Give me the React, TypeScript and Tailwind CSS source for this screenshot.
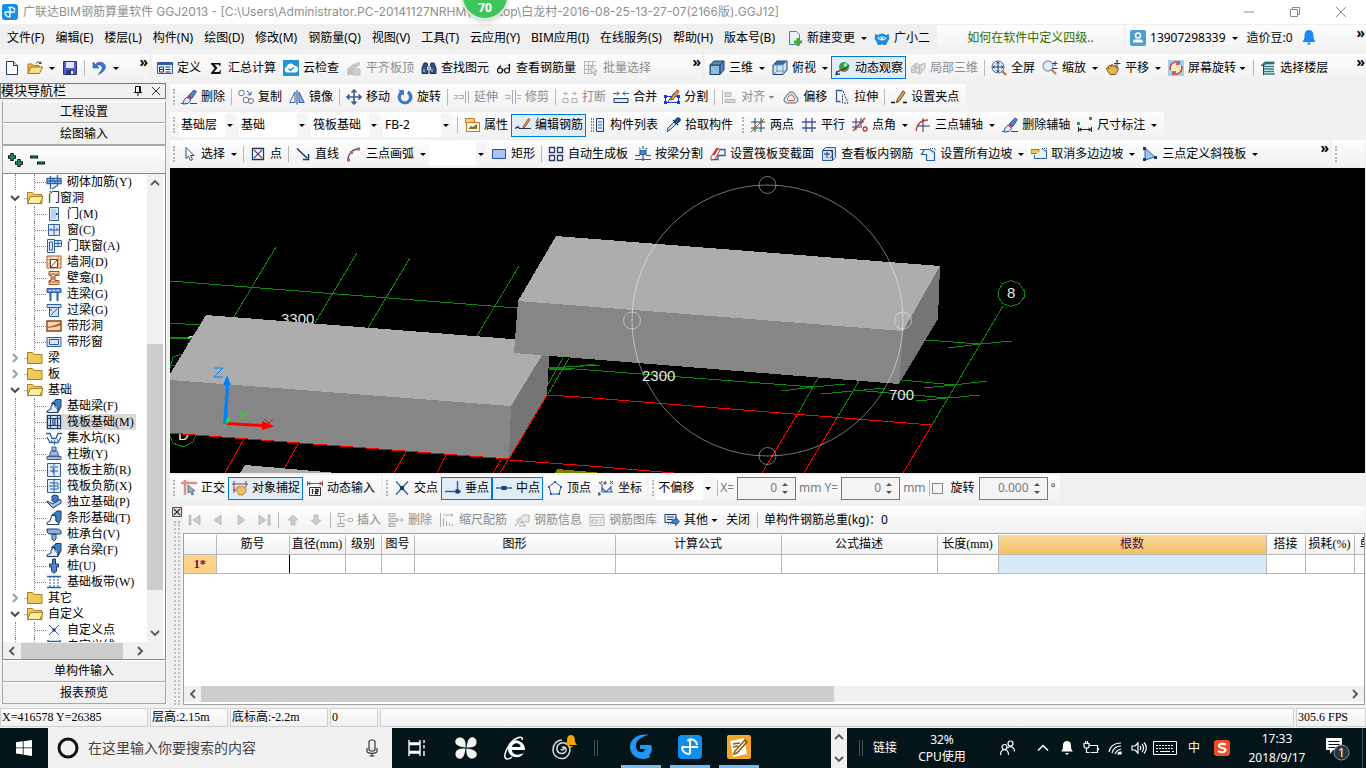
import React from 'react';
import clsx from 'clsx';

const B = '#2a5fa8'; // 图标主色
const N = '#1b3a6b';
const R = '#c0392b';
const G = '#2e9e3e';

// 16x16 工具栏图标
const icons: Record<string, React.ReactNode> = {
  logo: (
    <>
      <rect width="16" height="16" rx="3" fill="#1290ea" />
      <path d="M8 3.500V13M3 8h10M3 8c0 3 2 5 5 5M6.500 4C8 2.500 12.500 3 13 6.500" fill="none" stroke="#fff" strokeWidth="1.400" />
    </>
  ),
  file: (
    <>
      <path d="M2.500 1.500h7l4 4v9h-11z" fill="#fff" stroke={N} />
      <path d="M9.500 1.500v4h4" fill="#cfe0f5" stroke={N} />
    </>
  ),
  open: (
    <>
      <path d="M1 13V4h4l1.500 1.500H12V8" fill="#e9b949" stroke="#a9771a" />
      <path d="M1 13.500L4 7h11.500l-3 6.500z" fill="#fbe08d" stroke="#a9771a" />
      <path d="M9 3.500c1.500-2 4-2 5 0m0 0V1.500m0 2h-2" fill="none" stroke={N} />
    </>
  ),
  save: (
    <>
      <path d="M1.500 1.500h13v13h-13z" fill="#4b5fc4" stroke="#28347c" />
      <path d="M4 2h8v6H4z" fill="#dfe6f8" />
      <path d="M4.500 10h7v4.500h-7z" fill="#28347c" />
      <path d="M9 11h2v3H9z" fill="#fff" />
    </>
  ),
  undo: <path d="M2 2v6h6L5.800 5.800c2.500-1.800 5.800-.3 5.200 2.700-.4 2-2 3.500-3.500 6 4-1.800 7.500-5 6.800-8.500C13.500 2 7.500.8 4.300 4.300z" fill="#3c74cf" stroke="#2a56a3" strokeWidth=".6" />,
  define: (
    <>
      <path d="M.5 2.500h15v11H.5z" fill="#eaf1fb" stroke={B} />
      <path d="M.5 2.500h15v2.500H.5z" fill={B} />
      <path d="M2.500 7h4v5h-4zM8.500 7h5M8.500 9.500h5M8.500 12h5M2.500 9.500h4" fill="none" stroke={N} />
    </>
  ),
  sigma: <path d="M3 3h9.500v3h-1c-.2-1.200-.6-1.500-1.500-1.500H6.500L9.500 8l-3.500 4h4c1.200 0 1.700-.5 2-1.800h1L12.500 14H3v-1l3.700-4.700L3 4z" fill="#111" />,
  cloud: (
    <>
      <rect width="16" height="16" fill="#2196d6" />
      <path d="M4 12.500a3 3 0 0 1-.3-5.800 4 4 0 0 1 7.500-1A3.400 3.400 0 0 1 12 12.500z" fill="#fff" />
      <path d="M5.500 8.500l2 2 3.500-3.500" fill="none" stroke="#2196d6" strokeWidth="1.400" />
    </>
  ),
  align: (
    <>
      <path d="M1 9l6-5 7-2v3l-6 4v6H1z" fill="#999" />
      <path d="M8 9h6v6H8zM3 11h3M3 13h3M10 11h3M10 13h3" fill="#ccc" stroke="#777" />
    </>
  ),
  find: (
    <>
      <path d="M1 13.500V8l2-5h3l1 4v6.500zM15 13.500V8l-2-5h-3L9 7v6.500z" fill="#37527e" stroke="#1d3053" />
      <path d="M6.500 7h3v3h-3zM3 9v3M11 9v3" fill="#8ba6cf" stroke="#c2d3ec" />
    </>
  ),
  glasses: (
    <>
      <circle cx="4" cy="10.500" r="2.500" fill="none" stroke="#111" strokeWidth="1.200" />
      <circle cx="11" cy="10.500" r="2.500" fill="none" stroke="#111" strokeWidth="1.200" />
      <path d="M6.500 10h2M13.500 10V4.500L12 5.500M2 8.500l3-3" fill="none" stroke="#111" strokeWidth="1.200" />
    </>
  ),
  batch: (
    <>
      <path d="M1 1.500h12M1 5.500h12M1 9.500h9M1 13.500h7M1.500 1v13M5.500 1v13M9.500 1v8" fill="none" stroke="#777" />
      <path d="M8 6l6 5-2.500.5L13 15l-1.500.5L10 12l-2 1.500z" fill="#ddd" stroke="#666" />
    </>
  ),
  cube: (
    <>
      <path d="M1 5l4-4h10v9l-4 4.500H1z" fill="#4f8cc0" stroke="#1c3f66" />
      <path d="M2 6h8v8H2z" fill="#8dbde0" />
      <path d="M1 5h10v9.500M11 5l4-4" fill="none" stroke="#1c3f66" />
    </>
  ),
  cubeTop: (
    <>
      <path d="M1 5l4-4h10v9l-4 4.500H1z" fill="#cfe3f5" stroke="#1c3f66" />
      <path d="M1 5l4-4h10l-4 4z" fill="#2e6ca8" />
      <path d="M1 5h10v9.500M5 5v6h9M5 11l-3 3" fill="none" stroke="#6b93bb" />
    </>
  ),
  orbit: (
    <>
      <circle cx="9" cy="7" r="5" fill="#2ea043" />
      <circle cx="10.500" cy="5" r="2" fill="#9be39f" />
      <path d="M1 14c0-4 9-3 13-9M5 14l-4 .5L2 11" fill="none" stroke="#1c3f66" strokeWidth="1.300" />
      <path d="M4 10c3 1 7 0 9-2" fill="none" stroke="#c33" />
    </>
  ),
  part3d: <path d="M1 8l5-5 4 2 5-2v5l-5 6-4-2-4 1zM6 3l-1 9M10 5l-1 8M3 6l10 4M2 10l10-5" fill="#ccc" stroke="#777" />,
  fullscreen: (
    <>
      <circle cx="7" cy="7" r="6" fill="#e4eefb" stroke="#3a5f95" />
      <path d="M7 2v10M2 7h10M5.500 3.500L7 2l1.500 1.500M5.500 10.500L7 12l1.500-1.500M3.500 5.500L2 7l1.500 1.500M10.500 5.500L12 7l-1.500 1.500" fill="none" stroke={N} />
      <path d="M11 11l4 4" stroke="#b5702a" strokeWidth="2.200" />
    </>
  ),
  zoom: (
    <>
      <circle cx="6" cy="6" r="5" fill="#e4eefb" stroke="#8d9db5" strokeWidth="1.300" />
      <path d="M9.500 9.500l4.500 4.500" stroke="#c5862f" strokeWidth="2.200" />
      <path d="M13 1v5M10.500 3.500h5M10.500 8.500h5" stroke={N} />
    </>
  ),
  pan: (
    <>
      <path d="M1 8.500l2-1 1 1.500-.5-3 1.500-1 1.500 2L6 5l1.500-.5 1 2.500 1-2 1.500.5V8l2-.5.5 1.500-3 5.500H5z" fill="#e5b25a" stroke="#8c5a17" />
      <path d="M12 0v7M9 3.500h6.500M11 1.500L12 .3l1 1.200" fill="none" stroke={N} />
    </>
  ),
  screenRotate: (
    <>
      <path d="M0 0h16v16H0z" fill="#9ed0ee" />
      <path d="M3 9h10v5H3z" fill="#b8df8f" />
      <circle cx="8" cy="8" r="5" fill="#f7e8c0" />
      <path d="M2.500 10a6 6 0 0 1 9-7M13.500 6a6 6 0 0 1-9 7M11 1v3H8M5 15v-3h3" fill="none" stroke="#e0332c" strokeWidth="1.400" />
    </>
  ),
  floors: (
    <>
      <path d="M1 5.500L5 2h9v2H6L3 5.500z" fill="#2f7f86" stroke="#17484d" strokeWidth=".6" />
      <path d="M4 6.500h10M4 9h10M4 11.500h10M3 14h12" stroke="#2f7f86" strokeWidth="1.500" />
      <path d="M3.500 5v10" stroke="#17484d" />
    </>
  ),
  erase: (
    <>
      <path d="M0 14.500h6M9 14.500h7" stroke="#2a4a80" />
      <path d="M3 11l3-3 4 3-3 3.500-5 .5z" fill="#dfe7f5" stroke="#2a56a3" />
      <path d="M6 8l1.500-1.500 3.500 3L9.500 11z" fill="#c43e6b" />
      <path d="M7.500 6.500L13 1l2.500 1.500L11 9.500z" fill="#4e84cc" stroke={N} strokeWidth=".7" />
    </>
  ),
  copy: (
    <>
      <circle cx="3.500" cy="4" r="2.800" fill="none" stroke="#63748c" />
      <circle cx="8" cy="11" r="2.800" fill="none" stroke="#63748c" />
      <circle cx="13" cy="12" r="2.500" fill="none" stroke="#63748c" />
      <path d="M9 2l3.500 3.500M13 2.500v3.300H9.700" fill="none" stroke={B} />
    </>
  ),
  mirror: (
    <>
      <path d="M6 3v10.500H.8z" fill="#fff" stroke={B} />
      <path d="M10 3v10.500h5.200z" fill="#8fb4e5" stroke={B} />
      <path d="M8 1v14.500" stroke={N} />
    </>
  ),
  move: <path d="M8 1v14M1 8h14M5.500 3.500L8 1l2.500 2.500M5.500 12.500L8 15l2.500-2.500M3.500 5.500L1 8l2.500 2.500M12.500 5.500L15 8l-2.500 2.500" fill="none" stroke="#3b5c8d" strokeWidth="1.600" />,
  rotate: <path d="M10.500 4.500a4.500 4.500 0 1 1-5.500.3L6.500 6V1.500H2l1.300 1.300a7 7 0 1 0 8.400-.8z" fill="#3f7ad0" stroke="#2558a5" strokeWidth=".7" />,
  extend: <path d="M0 6.500h3v3H0M4.500 6.500h5v3h-5M11.500 2v12M14.500 2v12" fill="none" stroke="#666" />,
  trim: <path d="M0 6.500h5v3H0M7.500 1v14M10.500 1v14M12 6.500h4M12 9.500h4" fill="none" stroke="#666" />,
  breakIcon: <path d="M1 9.500h5v4H1zM10 9.500h5v4h-5zM6 4.500H2M4 2.500l-2 2 2 2M10 4.500h4M12 2.500l2 2-2 2" fill="none" stroke="#666" />,
  merge: (
    <>
      <path d="M1 9.500h14v4H1z" fill="#dce8f8" stroke={N} />
      <path d="M0 4.500h6M4 2.500l2 2-2 2M16 4.500h-6M12 2.500l-2 2 2 2" fill="none" stroke={B} />
    </>
  ),
  split: (
    <>
      <path d="M1.500 7.500h13v6h-13z" fill="#fff" stroke="#1a3fd0" />
      <path d="M0 6h3v3H0zM13 6h3v3h-3zM0 12h3v3H0zM13 12h3v3h-3z" fill="#1a3fd0" />
      <path d="M4 13l6-9" stroke="#1a3fd0" />
      <path d="M7 9l6-8 2 1.500-6 8-2.500.5z" fill="#e9a949" stroke="#8b3a1f" />
    </>
  ),
  alignSide: <path d="M1.500 1v14M4 3.500h6v4H4zM4 10.500h10v3H4z" fill="#bbb" stroke="#777" />,
  offset: (
    <>
      <path d="M5 5a3.500 3.500 0 0 1 6.500 0l3 4a3.500 3.500 0 0 1-2 5h-9a3.500 3.500 0 0 1-2-5z" fill="#dbe4ee" stroke="#4c6885" />
      <path d="M6.500 6.500a2 2 0 0 1 3 0l2 3a1.500 1.500 0 0 1-1 2h-5a1.500 1.500 0 0 1-1-2z" fill="#fff" stroke="#d0402f" />
    </>
  ),
  stretch: (
    <>
      <path d="M8.500 1.500h-6v11h4" fill="none" stroke={B} strokeWidth="1.300" />
      <path d="M9 2l5 12H8.500v-9" fill="none" stroke={N} strokeDasharray="2 1" />
    </>
  ),
  grip: (
    <>
      <path d="M0 13.500h4M12 13.500h4" stroke="#111" strokeWidth="1.500" />
      <path d="M6 11l6-9 2 1.500-6 9-2.500 1z" fill="#e9b949" stroke="#5b3a1f" />
    </>
  ),
  props: (
    <>
      <path d="M1.500 1.500h9v4h-9z" fill="#f7cf8a" stroke="#b9782a" />
      <path d="M2.500 5.500h13v9h-13z" fill="#fff6e0" stroke="#b9782a" />
      <path d="M4 12l3-3 2 1 4-3v5z" fill="#8d6b2b" />
    </>
  ),
  editBar: (
    <>
      <path d="M0 11.500l3-2c0 2 1 2 3 2h10" fill="none" stroke="#333" strokeWidth="1.200" />
      <path d="M8.500 9l5-7.500L15 2.800 10 10l-2 .7z" fill="#e7a04a" stroke="#8b3a1f" strokeWidth=".8" />
    </>
  ),
  list: (
    <>
      <path d="M1 2h3M1 5h3M1 8h3M1 11h3M1 14h3" stroke={B} strokeDasharray="1 1" strokeWidth="1.500" />
      <path d="M6.500 1.500h7v13h-7z" fill="#e9f1fb" stroke={N} />
      <path d="M8 5h4M8 8h4M8 11h4" stroke={B} />
    </>
  ),
  pick: (
    <>
      <path d="M2 14.500l1-3.500 6-6 2 2-6 6z" fill="#bfe0f5" stroke="#1f5488" />
      <path d="M8 3l5 5M9.500 4.500L12 1.500c1.500-1.500 4 1 2.500 2.500L11.500 6.500z" fill="#245b9c" stroke="#173f70" strokeWidth="1.500" />
    </>
  ),
  axis2: (
    <>
      <path d="M5 1v14M11 1v14M1 5h14M1 11h14" stroke={N} />
      <path d="M1 15L14 2" stroke={R} />
      <circle cx="5" cy="11" r="1.500" fill={G} />
      <circle cx="11" cy="5" r="1.500" fill={G} />
    </>
  ),
  axisPar: <path d="M5 1v14M11 1v14M1 5h14M1 11h14" stroke="#3c5a9a" strokeWidth="1.300" />,
  axisAngle: (
    <>
      <path d="M4 1v12M9 1v8M0 5h12M0 10h10" stroke={N} />
      <path d="M1 14L13 1" stroke={R} strokeWidth="1.300" />
      <circle cx="13" cy="12" r="2" fill="none" stroke={R} strokeWidth="1.300" />
    </>
  ),
  axisArc: (
    <>
      <path d="M1 14C2 7 6 3 13 3" fill="none" stroke={R} strokeWidth="1.300" />
      <path d="M8 1v14M3 9h12" stroke={N} />
    </>
  ),
  dim: (
    <>
      <path d="M1.500 10v5M14.500 10v5M2 12.500h12M4.500 11L2 12.500 4.500 14M11.500 11l2.500 1.500-2.500 1.500" fill="none" stroke="#222" />
      <path d="M0 5h3v3H0zM12 0h3v3h-3z" fill={G} />
    </>
  ),
  cursor: <path d="M5 1.500v11l2.500-2.300 2 4.300 2-1-2-4H13z" fill="#fff" stroke="#33496e" />,
  point: (
    <>
      <path d="M2.500 2.500h11v11h-11z" fill="#fff" stroke={N} strokeWidth="1.300" />
      <path d="M4 4l8 8" stroke={R} strokeWidth="1.300" />
      <path d="M12 4l-8 8" stroke={B} strokeWidth="1.300" />
    </>
  ),
  line: <path d="M2 2.500l10 9.500M13.500 8v5.500H8" fill="none" stroke={N} strokeWidth="1.500" />,
  arc: (
    <>
      <path d="M2 14C2 8 6 3 13 3" fill="none" stroke="#3c5a9a" strokeWidth="1.300" />
      <path d="M1 12.500h3v3H1zM4 5h3v3H4zM11 1.500h3v3h-3z" fill="#d8622f" />
    </>
  ),
  rect: <path d="M1.500 3.500h13v9h-13z" fill="#a9c4f2" stroke="#2a4fb0" />,
  autoSlab: <path d="M1.500 1.500h5v5h-5zM9.500 1.500h5v5h-5zM1.500 9.500h5v5h-5zM9.500 9.500h5v5h-5z" fill="#fff" stroke="#2a3f6b" strokeWidth="1.400" />,
  beamSplit: <path d="M5 4.500h6v4H5zM8 0v3M8 9v6M0 9.500h5M11 9.500h5M0 13.500h16M4 2l1.500 1M12 2l-1.500 1" fill="#4e84cc" stroke={B} strokeWidth="1.200" />,
  raftEdit: (
    <>
      <path d="M1 13.500h7v-4h7v-6H8" fill="none" stroke={B} strokeWidth="1.300" />
      <path d="M1 11l6-9 3 2-5 9-4 1z" fill="#fff" stroke="#d0302a" />
      <path d="M3.500 9l4-6.500" stroke="#d0302a" strokeWidth="2" />
    </>
  ),
  viewBars: (
    <>
      <path d="M1.500 4.500l3-3h10v10l-3 3h-10z" fill="#cfe0f5" stroke={B} />
      <path d="M1.500 4.500h10v10M3 8h6M6 6v6M9 12c3-1 3-6 1-7" fill="none" stroke={N} />
    </>
  ),
  slope: (
    <>
      <path d="M0 3.500h9M4.500 3.500l-3 5h5v6h8v-8l-5-3" fill="#e9f1fb" stroke={B} strokeWidth="1.200" />
      <path d="M10 2.500h5v3" fill="none" stroke={N} strokeDasharray="1 1" />
    </>
  ),
  slopeOff: (
    <>
      <path d="M0 3.500h8v4H0z" fill="#f2cc4d" stroke="#9a741b" />
      <path d="M3.500 9v3.500h12v-7l-4-2" fill="#e9f1fb" stroke={B} />
      <path d="M11 2.500h4.500v3" fill="none" stroke={N} strokeDasharray="1 1" />
    </>
  ),
  slant: (
    <>
      <path d="M3 2v12l10-3z" fill="#9cc3f2" stroke={B} />
      <path d="M1 1h3v3H1zM1 12h3v3H1zM12 10h3v3h-3z" fill={N} />
    </>
  ),
  ortho: (
    <>
      <path d="M0 3h16M4 0v15" stroke="#dc8f8b" strokeWidth="2.500" />
      <path d="M7 5l7 6h-3l1.500 3.500-1.500.5-1.500-3.500L7 13z" fill="#9eb3c9" stroke="#5b7391" />
    </>
  ),
  snap: (
    <>
      <path d="M2 1v12M0 4h16M14 1v6M1 10h5" stroke="#913a30" />
      <path d="M4 9c0-2 2-2 2-.5V7c1-1.500 2-1 2.500 0 1-1 2-1 2.500 0 1.500-.5 3 0 3 2v3l-3 3H7z" fill="#ecc06a" stroke="#9a6a22" strokeWidth=".7" />
    </>
  ),
  dynInput: (
    <>
      <path d="M.5 1v5M15.500 1v5M1 3.500h14M3.500 2L1 3.500 3.500 5M12.500 2L15 3.500 12.500 5" fill="none" stroke="#a04840" />
      <path d="M2.500 7.500h11v8h-11z" fill="#fff" stroke="#333" />
      <path d="M5.500 9v5M8 9.500h3v2H8.500v2H11" fill="none" stroke="#222" strokeWidth="1.300" />
    </>
  ),
  cross: (
    <>
      <path d="M2 1.500l12 13M14 1.500l-12 13" stroke={B} strokeWidth="1.300" />
      <path d="M6 6h4v4H6z" fill={N} />
    </>
  ),
  perp: (
    <>
      <path d="M0 11.500h16M12.500 1v12" stroke={B} strokeWidth="1.400" />
      <path d="M10.500 9.500h4v4h-4z" fill={N} />
    </>
  ),
  mid: (
    <>
      <path d="M0 8h16" stroke={B} strokeWidth="1.400" />
      <path d="M5.500 6h5v4h-5z" fill={N} />
    </>
  ),
  vertex: (
    <>
      <path d="M8 2l6 4.500L12 14H4L2 6.500z" fill="none" stroke={B} />
      <path d="M7 1h2v2H7zM1 6h2v2H1zM13 6h2v2h-2zM3 13h2v2H3zM11 13h2v2h-2z" fill={B} />
    </>
  ),
  coord: (
    <>
      <path d="M4 4v8h11M4 8l4 4 5-5v5" fill="none" stroke={B} strokeWidth="1.200" />
      <path d="M1 2l1.500 2L4 1M1 14h1M12 1l3 3M15 1l-3 3M6 2h2v2H6zM0 13h2v2H0z" fill="none" stroke="#444" />
    </>
  ),
  first: <path d="M2 3h2v10H2zM13 3v10L6 8z" fill="#ccc" stroke="#aaa" strokeWidth=".6" />,
  prev: <path d="M11 3v10L4 8z" fill="#ccc" stroke="#aaa" strokeWidth=".6" />,
  next: <path d="M5 3v10l7-5z" fill="#ccc" stroke="#aaa" strokeWidth=".6" />,
  last: <path d="M12 3h2v10h-2zM3 3v10l7-5z" fill="#ccc" stroke="#aaa" strokeWidth=".6" />,
  up: <path d="M8 3l5 5h-3v5H6V8H3z" fill="#ccc" stroke="#aaa" strokeWidth=".6" />,
  down: <path d="M8 13l5-5h-3V3H6v5H3z" fill="#ccc" stroke="#aaa" strokeWidth=".6" />,
  insertRow: <path d="M1 1.500h6v3H1zM1 11.500h6v3H1zM3.500 4.500v7M6 8h4M11.500 6.500h4v3h-4z" fill="none" stroke="#666" />,
  removeRow: <path d="M1 1.500h6v3H1zM1 6.500h8v3H1zM1 11.500h6v3H1zM9 8h6M13 6l2 2-2 2" fill="#ccc" stroke="#666" />,
  scaleBar: <path d="M1.500 1v14M4 3h10M12 1.500L14 3l-2 1.500M4.500 6v8M7.500 9v5M10.500 11v3M13.500 12v2" fill="none" stroke="#666" />,
  barInfo: <path d="M1 14L9 3h6v7H7M2 9c3-5 6-3 6 1l4 4H5M5 12l3-3" fill="#ddd" stroke="#777" />,
  barLib: <path d="M1 2.500h14v11H1zM1 5.500h14M3 8h5v3H3zM10 8h3M10 11h3" fill="#eee" stroke="#777" />,
  others: (
    <>
      <path d="M1 2.500h11v8H1zM3 5h7M3 7.500h5" fill="#e9f1fb" stroke={N} />
      <path d="M4 12h4" stroke={N} strokeDasharray="1 1" />
      <path d="M8 7.500h3.500V5l4 4.500-4 4.500v-2.500H8z" fill="#3f7ad0" stroke={N} strokeWidth=".6" />
    </>
  ),
  newChange: (
    <>
      <path d="M2.500 1.500h7l3 3v10h-10z" fill="#e6f4fb" stroke="#2d8dbd" />
      <path d="M9.500 8h3v2.500H15v3h-2.500V16h-3v-2.500H7v-3h2.500z" fill="#49a827" />
    </>
  ),
  robot: (
    <>
      <path d="M1 4l3 1A6 6 0 0 1 12 5l3-1v3c1 1 .5 3-1 3.500-.3 2-1.500 3-2 4.500H9.500L8 14l-1.500 1H4c-.5-1.500-1.700-2.500-2-4.500C.7 10 0 8 1 7z" fill="#1e8ce0" />
      <path d="M3.500 7.500c2-1.500 7-1.500 9 0 0 4-9 4-9 0z" fill="#cdeafd" />
      <path d="M6 7.500v1.500M10 7.500v1.500" stroke="#0d4b80" />
    </>
  ),
  user: (
    <>
      <rect width="16" height="16" rx="2" fill="#4a9fd0" />
      <circle cx="8" cy="5.500" r="2.500" fill="none" stroke="#fff" strokeWidth="1.500" />
      <path d="M3 12.500c0-4 3-3 5-3s5-1 5 3z" fill="#fff" />
    </>
  ),
  bell: <path d="M8 0C4.500 0 3.500 3 3.500 6c0 3-1 4-2 6h13c-1-2-2-3-2-6 0-3-1-6-4.500-6zM6 12.500h4L8 15.500z" fill="#1e88f5" />,
};

// 构件树图标
const treeIcons: Record<string, React.ReactNode> = {
  masonry: <path d="M1 4.500h14v5H1zM1 7h14M4.500 2v13M11.500 1v11M7 4v3M9 7v3M6 15l6-4" fill="#d5e4f7" stroke={B} strokeWidth="1.300" />,
  door: (
    <>
      <path d="M3.500 1.500h9v13h-9z" fill="#e3edfa" stroke={B} />
      <path d="M5 3h5v10H5z" fill="#b9d2f2" />
      <path d="M10 7h1.500v2H10z" fill={N} />
    </>
  ),
  window: <path d="M2.500 2.500h11v11h-11zM8 2.500v11M3 8h10M5 8V6M11 8V6" fill="#e3edfa" stroke={B} />,
  doorWin: <path d="M1.500 1.500h7v13h-7zM8.500 2.500h7v6h-7zM12 2v7M9 5.500h6M3.500 4h3v8h-3z" fill="#e3edfa" stroke={B} />,
  wallHole: (
    <>
      <path d="M1 2h14v12H1z" fill="#fbe3d0" stroke="#b5541c" />
      <path d="M1 6h14M1 10h14M4 2v12M12 2v12" stroke="#d98a55" />
      <path d="M4.500 5.500h7v8h-7zM5 13l6-7" fill="#fff" stroke="#6b3a18" />
    </>
  ),
  niche: <path d="M3 1.500h10v4H9v5h4v4H3v-4h2v-5H3zM3 4h9M5 7h4M5 9h4M3 12h9" fill="#f9d9bd" stroke="#a34f1d" />,
  beamG: (
    <>
      <path d="M1 2.500h14v4H1z" fill="#5f97da" stroke={B} />
      <path d="M3 4.500h2M7 4.500h2M11 4.500h2" stroke="#dce8f8" />
      <path d="M4.500 7v8M11.500 7v8" stroke={B} strokeWidth="2" />
    </>
  ),
  lintel: <path d="M1 2.500h14v3H1zM3.500 5.500h9v9h-9zM5 13l6-6M3 8h3" fill="#cfe0f5" stroke={B} />,
  bandHole: (
    <>
      <path d="M1 3h14v10H1z" fill="#f7d4b8" stroke="#8b4513" strokeWidth="1.400" />
      <path d="M1 9c5-1 10-2 14-5v3c-4 2-9 2-14 3z" fill="#a8602c" />
    </>
  ),
  bandWin: <path d="M1 3.500h14v9H1zM3.500 5.500h9v5h-9z" fill="#d5e4f7" stroke={B} />,
  fBeam: (
    <>
      <path d="M1 14.500h11v-3l-3-3V5L5 8v3l-4 2z" fill="#e3edfa" stroke={N} />
      <path d="M5 6l5-4.500h5V9l-3 5V9l-3-2V5z" fill="#3f7fc0" stroke={N} />
    </>
  ),
  raft: <path d="M1.500 1.500h13v13h-13zM4.500 1.500v13M11.500 1.500v13M1.500 4.500h13M1.500 11.500h13M7 4.500v7M9 4.500v7" fill="#dce8f8" stroke={N} strokeWidth="1.200" />,
  pit: <path d="M0 3.500h4l2 5h4l2-5h4M1 7l3 5.500h8L15 7M5 11h1M8 11h1M11 10h1M8 14h1" fill="none" stroke={B} strokeWidth="1.300" />,
  pier: <path d="M6 1h4v4H6zM5 5h6l2 5H3zM1 10.500h14v3H1z" fill="#9fb9da" stroke="#3d5f8f" />,
  rebarMain: <path d="M1.500 1.500h13v13h-13zM4 5h3v6M8 2v12M9 5h3M4 9h8" fill="#e3edfa" stroke={B} />,
  rebarNeg: <path d="M1.500 1.500h13v13h-13zM4 5h8v2M8 2v12M4 11h8V9M3 8h10" fill="#e3edfa" stroke={B} />,
  single: (
    <>
      <path d="M1 8l6 6 8-5V6l-3-1-5 5-6-3z" fill="#9cc3ea" stroke={N} />
      <path d="M6 2l3-1 3 1v5L9 8.500 6 7z" fill="#3f7fc0" stroke={N} />
    </>
  ),
  strip: (
    <>
      <path d="M1 14.500h12v-2L10 11V6L6 5 4 11l-3 1.500z" fill="#fff" stroke={N} />
      <path d="M6 5l5-4h4v8l-2 4-3-2V6z" fill="#3f7fc0" stroke={N} />
    </>
  ),
  cap: <path d="M1 3h11l3 2v3H3L1 6zM6 8h4v5l-2 2-2-2z" fill="#8db4e0" stroke={N} />,
  pile: <path d="M6.500 1h3v5h3v3h-2v4L8 15.500 5.500 13V9h-2V6h3z" fill="#4e84cc" stroke={N} />,
  bandPlate: (
    <>
      <path d="M1 2.500h14M1 13.500h14" stroke={B} strokeWidth="1.500" />
      <path d="M4 2v12M8 2v12M12 2v12" stroke={B} strokeDasharray="2 1" />
    </>
  ),
  custom: (
    <>
      <path d="M3 3l10 10M13 3L3 13" stroke={B} />
      <path d="M6.500 6.500h3v3h-3z" fill={N} />
    </>
  ),
  customLine: <path d="M2 3.500h12M2 2v3M14 2v3M4 5l8 8" stroke={B} strokeWidth="1.500" />,
};

function Icon({ children, className = 'h-4 w-4' }: { children: React.ReactNode; className?: string }) {
  return (
    <svg viewBox="0 0 16 16" className={clsx('shrink-0', className)} aria-hidden="true">
      {children}
    </svg>
  );
}

function Arrow({ tight }: { tight?: boolean }) {
  return (
    <svg viewBox="0 0 8 8" className={clsx('h-2 shrink-0', tight ? '-ml-1 w-[11px]' : 'w-2')} aria-hidden="true">
      <path d="M2 3h6L5 6z" fill="currentColor" />
    </svg>
  );
}

interface ToolProps {
  icon: string;
  label?: string;
  title?: string;
  arrow?: boolean;
  tight?: boolean;
  active?: boolean;
  disabled?: boolean;
}

function Tool({ icon, label, title, arrow, tight, active, disabled }: ToolProps) {
  return (
    <button
      type="button"
      title={title}
      disabled={disabled}
      className={clsx(
        'flex h-[23px] shrink-0 items-center gap-1 whitespace-nowrap border pl-[3px] pr-[2px]',
        active ? 'border-[#0078d7] bg-[#e0ecf6]' : 'border-transparent',
        disabled && 'text-[#8c8c8c]'
      )}
    >
      <Icon className={clsx('h-4 w-4', disabled && 'opacity-50 grayscale')}>{icons[icon]}</Icon>
      {label && <span>{label}</span>}
      {arrow && <Arrow tight={tight} />}
    </button>
  );
}

const Sep = () => <span className="ml-[3px] mr-0.5 h-4 w-px shrink-0 bg-[#b8b8b8]" />;
const Grip = () => <span className="ml-[3px] mr-0.5 h-4 w-0 shrink-0 border-l-2 border-dotted border-[#b4b4b4]" />;
const More = () => (
  <button type="button" title="更多" className="ml-auto shrink-0 self-start pr-px text-[14px] font-bold leading-4">
    »
  </button>
);

function Bar({ children, className }: { children?: React.ReactNode; className?: string }) {
  return (
    <div className={clsx('flex h-[27px] shrink-0 items-center bg-linear-to-b from-[#fdfdfd] to-[#f1f1f1]', className)}>
      {children}
    </div>
  );
}

function Combo({ label, value, className }: { label: string; value: string; className: string }) {
  return (
    <div className={clsx('relative h-[23px] shrink-0 bg-white', className)}>
      <select aria-label={label} className="h-full w-full appearance-none bg-transparent pl-0.5 outline-none">
        <option>{value}</option>
      </select>
      <span className="pointer-events-none absolute inset-y-0 right-0 flex w-[11px] items-center bg-[#f5f5f5]">
        <Arrow />
      </span>
    </div>
  );
}

function Spinner({ id, value, className }: { id: string; value: string; className: string }) {
  return (
    <div className={clsx('flex h-[23px] shrink-0 items-center border border-[#777] bg-[#f4f4f4]', className)}>
      <input id={id} defaultValue={value} className="w-0 flex-1 bg-transparent pr-1 text-right text-[#7a7a7a] outline-none" />
      <div className="flex h-full w-3.5 flex-col justify-between py-1 text-[#555]">
        <button type="button" aria-label="增加">
          <svg viewBox="0 0 8 5" className="h-[5px] w-2" aria-hidden="true">
            <path d="M1 4h6L4 1z" fill="currentColor" />
          </svg>
        </button>
        <button type="button" aria-label="减少">
          <svg viewBox="0 0 8 5" className="h-[5px] w-2" aria-hidden="true">
            <path d="M1 1h6L4 4z" fill="currentColor" />
          </svg>
        </button>
      </div>
    </div>
  );
}

function Chevron({ d, className }: { d: string; className?: string }) {
  return (
    <svg viewBox="0 0 10 10" className={clsx('h-2.5 w-2.5 shrink-0', className)} fill="none" stroke="currentColor" strokeWidth="1.8" aria-hidden="true">
      <path d={d} />
    </svg>
  );
}

const LEFT = 'M7 1L3 5l4 4';
const RIGHT = 'M3 1l4 4-4 4';
const UP = 'M1 7l4-4 4 4';
const DOWN = 'M1 3l4 4 4-4';

const menus = ['文件(F)', '编辑(E)', '楼层(L)', '构件(N)', '绘图(D)', '修改(M)', '钢筋量(Q)', '视图(V)', '工具(T)', '云应用(Y)', 'BIM应用(I)', '在线服务(S)', '帮助(H)', '版本号(B)'];

interface TreeRow {
  text: string;
  icon?: string;
  open?: boolean;
  selected?: boolean;
}

// 没有 icon 的为文件夹
const tree: TreeRow[] = [
  { text: '砌体加筋(Y)', icon: 'masonry' },
  { text: '门窗洞', open: true },
  { text: '门(M)', icon: 'door' },
  { text: '窗(C)', icon: 'window' },
  { text: '门联窗(A)', icon: 'doorWin' },
  { text: '墙洞(D)', icon: 'wallHole' },
  { text: '壁龛(I)', icon: 'niche' },
  { text: '连梁(G)', icon: 'beamG' },
  { text: '过梁(G)', icon: 'lintel' },
  { text: '带形洞', icon: 'bandHole' },
  { text: '带形窗', icon: 'bandWin' },
  { text: '梁' },
  { text: '板' },
  { text: '基础', open: true },
  { text: '基础梁(F)', icon: 'fBeam' },
  { text: '筏板基础(M)', icon: 'raft', selected: true },
  { text: '集水坑(K)', icon: 'pit' },
  { text: '柱墩(Y)', icon: 'pier' },
  { text: '筏板主筋(R)', icon: 'rebarMain' },
  { text: '筏板负筋(X)', icon: 'rebarNeg' },
  { text: '独立基础(P)', icon: 'single' },
  { text: '条形基础(T)', icon: 'strip' },
  { text: '桩承台(V)', icon: 'cap' },
  { text: '承台梁(F)', icon: 'fBeam' },
  { text: '桩(U)', icon: 'pile' },
  { text: '基础板带(W)', icon: 'bandPlate' },
  { text: '其它' },
  { text: '自定义', open: true },
  { text: '自定义点', icon: 'custom' },
  { text: '自定义线', icon: 'customLine' },
];

function TreeItem({ row }: { row: TreeRow }) {
  if (!row.icon) {
    return (
      <li className="flex h-4 items-center pl-[7px]">
        <Chevron d={row.open ? DOWN : RIGHT} className={row.open ? 'text-[#444]' : 'text-[#999]'} />
        <span className="ml-1 w-[3px] border-t border-dotted border-[#888]" />
        <svg viewBox="0 0 16 16" className="h-4 w-4" aria-hidden="true">
          <path d="M.5 13.500v-11h5l1.500 2h8v9z" fill="#f0c95e" stroke="#a97f22" />
          {row.open && <path d="M.5 13.500L3.500 6.500h12.500l-3 7z" fill="#fdeaa8" stroke="#a97f22" />}
        </svg>
        <span className="ml-[5px]">{row.text}</span>
      </li>
    );
  }
  return (
    <li className="flex h-4 items-center pl-3">
      <span className="h-4 w-[19px] border-l border-dotted border-[#888]" />
      <span className="flex h-4 w-3 items-center border-l border-dotted border-[#888]">
        <span className="w-full border-t border-dotted border-[#888]" />
      </span>
      <span className={clsx('flex h-4 items-center gap-[5px] whitespace-nowrap pr-0.5', row.selected && 'bg-[#d9d9d9]')}>
        <Icon>{treeIcons[row.icon]}</Icon>
        {row.text}
      </span>
    </li>
  );
}

function NavButton({ children }: { children: React.ReactNode }) {
  return (
    <button type="button" className="block h-[22px] w-full shrink-0 border border-[#a8a8a8] border-t-white bg-[#f0f0f0] leading-4">
      {children}
    </button>
  );
}

function Sidebar() {
  return (
    <aside className="flex w-[167px] shrink-0 flex-col pb-0.5 pr-px font-[Liberation_Serif,Noto_Sans_CJK_SC,serif]">
      <header className="flex h-4 shrink-0 items-center border border-[#777]">
        <h2 className="flex-1 text-[13px] leading-4">模块导航栏</h2>
        <button type="button" aria-label="固定" className="mr-2">
          <svg viewBox="0 0 10 10" className="h-2.5 w-2.5" stroke="#111" fill="none" aria-hidden="true">
            <path d="M2.500 6V.5h5V6M6.500 1v5M1 6.500h8M5 7v3" />
          </svg>
        </button>
        <button type="button" aria-label="关闭导航栏" className="mr-1">
          <svg viewBox="0 0 10 10" className="h-2.5 w-2.5" stroke="#333" aria-hidden="true">
            <path d="M1 1l8 8M9 1l-8 8" />
          </svg>
        </button>
      </header>
      <nav className="flex flex-1 flex-col pl-0.5 pt-0.5">
        <NavButton>工程设置</NavButton>
        <NavButton>绘图输入</NavButton>
        <div className="flex h-7 shrink-0 items-center gap-1.5 border border-b-0 border-[#a8a8a8] bg-linear-to-b from-white to-[#f1f1f1] pl-1">
          <button type="button" aria-label="全部展开">
            <Icon>
              <path d="M1 5h8M5 1v8M8 11h8M12 7v8" stroke="#111" strokeWidth="3.4" />
              <path d="M2 5h6M5 2v6M9 11h6M12 8v6" stroke="#17a08c" strokeWidth="1.400" />
            </Icon>
          </button>
          <button type="button" aria-label="全部折叠">
            <Icon>
              <path d="M1 5h8M8 11h8" stroke="#111" strokeWidth="3" />
              <path d="M2 5h6M9 11h6" stroke="#17a08c" strokeWidth="1.200" />
            </Icon>
          </button>
        </div>
        <div className="flex flex-1 flex-col border border-[#828790] bg-white pr-0.5 contain-size">
          <div className="flex min-h-0 flex-1">
            <ul className="flex-1 overflow-hidden">
              {tree.map((row, i) => (
                <TreeItem key={i} row={row} />
              ))}
            </ul>
            <div className="flex w-4 shrink-0 flex-col items-center bg-[#f0f0f0] py-1 text-[#555]">
              <Chevron d={UP} />
              <div className="mt-[156px] h-[246px] w-full shrink-0 bg-[#cdcdcd]" />
              <Chevron d={DOWN} className="mt-auto" />
            </div>
          </div>
          <div className="flex h-[17px] shrink-0 items-center bg-[#f0f0f0] pl-1 pr-[18px] text-[#555]">
            <Chevron d={LEFT} />
            <div className="ml-1 mr-auto h-4 w-[102px] bg-[#cdcdcd]" />
            <Chevron d={RIGHT} />
          </div>
        </div>
        <NavButton>单构件输入</NavButton>
        <NavButton>报表预览</NavButton>
      </nav>
    </aside>
  );
}

// 三维视图：坐标以视图左上角为原点
function Viewport() {
  return (
    <svg className="block h-[305px] w-full bg-black" role="img" aria-label="三维视图">
      <g stroke="#0b8a0b" fill="none" shapeRendering="crispEdges">
        <path d="M0 113L347 140M106 79L64 149M187 85L145 155M240 90L198 160M349 98L307 168M0 155L30 157" />
        <path d="M0 170H22M379 201H402" strokeWidth="2" />
        <path d="M0 200L3 189L12 186M0 268L3 275L13 279L23 274L26 266" />
        <path d="M379 200L430 197M393 190L377 218M399 190L378 226M379 199L643 219L675 216M611 223L643 219M410 198L425 196" />
        <path d="M651 226L715 220M684 222L778 230L810 227M746 233L778 230M732 212L784 217L817 213M754 220L784 217M755 172L810 176L842 173M778 180L810 176" />
        <path d="M833 138L762 257M648 210L627 247M689 213L667 250" />
        <path d="M841 112.500l8 3 5 7v7l-5 6-8 3-8-3-4.500-6v-7l4.500-7z" />
      </g>
      <g stroke="#f00" fill="none" shapeRendering="crispEdges">
        <path d="M377 227L410 229L762 257L733 305M627 247L592 305M667 250L634 305M339 292L420 298L504 305M0 197H6" />
        <path d="M74 271L55 305M128 276L114 301M236 284L224 305M276 287L267 305M331 292L323 305M338 292L330 305" />
      </g>
      <g fill="#e8e8e8" fontFamily="Liberation Sans, sans-serif" fontSize="15">
        <text x="111" y="156">3300</text>
        <text x="17" y="178">3</text>
        <text x="8" y="272">D</text>
        <text x="472" y="213">2300</text>
        <text x="719" y="232">700</text>
        <text x="837" y="130">8</text>
      </g>
      <g shapeRendering="crispEdges">
        <path d="M36 147L380 174L341 238L0 212V206z" fill="#adadad" />
        <path d="M0 212L341 238L339 291L0 265z" fill="#868686" />
        <path d="M341 238L380 174L377 227L339 291z" fill="#757575" />
        <path d="M0 265L339 291L377 227" fill="none" stroke="#f00" />
        <path d="M386 68L770 98L733 163L348 133z" fill="#adadad" />
        <path d="M348 133L733 163L729 216L344 185z" fill="#868686" />
        <path d="M733 163L770 98L768 151L729 216z" fill="#757575" />
        <path d="M70 305L75 297L167 305z" fill="#adadad" />
        <path d="M385 305L387 301L433 305z" fill="#808000" />
      </g>
      <g stroke="#fff" strokeOpacity=".45" fill="none">
        <circle cx="597.5" cy="152.5" r="135.5" />
        <circle cx="597.5" cy="17" r="8.5" />
        <circle cx="597.5" cy="288" r="8.5" />
        <circle cx="462" cy="152.5" r="8.5" />
        <circle cx="733" cy="152.5" r="8.5" />
      </g>
      <path d="M53 256L56 217H53L57 207L61 217H59L57 256z" fill="#0080ff" />
      <path d="M57 254L92 256V253L104 258.500L92 262V259L57 257z" fill="#f00" />
      <path d="M56 256l1-7 3 2-2 4z" fill="#0f0" />
      <g fill="none">
        <path d="M44 200h9l-9 9h9" stroke="#0080ff" />
        <path d="M68 243l5 4 5-4M73 247v4" stroke="#0f0" />
        <path d="M94 251l9 8M103 251l-9 8" stroke="#e01010" />
      </g>
    </svg>
  );
}

const columns = [
  { name: '', width: 32 },
  { name: '筋号', width: 73 },
  { name: '直径(mm)', width: 56 },
  { name: '级别', width: 36 },
  { name: '图号', width: 33 },
  { name: '图形', width: 201 },
  { name: '计算公式', width: 166 },
  { name: '公式描述', width: 156 },
  { name: '长度(mm)', width: 61 },
  { name: '根数', width: 268 },
  { name: '搭接', width: 39 },
  { name: '损耗(%)', width: 49 },
  { name: '单重(kg)', width: 55 },
];

function RebarTable() {
  return (
    <div className="flex min-h-[160px] flex-1 flex-col overflow-hidden border border-[#a0a0a0] bg-white pt-px font-[Liberation_Serif,Noto_Sans_CJK_SC,serif]">
      <div className="flex-1 overflow-hidden">
        <table className="w-[1225px] table-fixed border-collapse">
          <colgroup>
            {columns.map((c) => (
              <col key={c.name} style={{ width: c.width }} />
            ))}
          </colgroup>
          <thead>
            <tr className="h-[19px]">
              {columns.map((c) => (
                <th
                  key={c.name}
                  scope="col"
                  className={clsx(
                    'whitespace-nowrap border-b border-r border-[#b8b8b8] p-0 text-center font-normal leading-4',
                    c.name === '根数' ? 'bg-linear-to-b from-[#f8d79a] to-[#f2c263] text-[#4a0d4a]' : 'bg-linear-to-b from-white to-[#f1f1f1]'
                  )}
                >
                  {c.name}
                </th>
              ))}
            </tr>
          </thead>
          <tbody>
            <tr className="h-[19px]">
              {columns.map((c, i) =>
                i === 0 ? (
                  <th key={c.name} scope="row" className="border-b border-r border-[#b8b8b8] bg-[#ffd28a] p-0 font-bold leading-4 text-[#5a0d4a]">
                    1*
                  </th>
                ) : (
                  <td
                    key={c.name}
                    className={clsx('border-b border-r border-[#b8b8b8]', i === 1 && 'border-r-black', c.name === '根数' && 'bg-[#d8e9f8]')}
                  />
                )
              )}
            </tr>
          </tbody>
        </table>
      </div>
      <div className="mb-0.5 flex h-4 items-center bg-[#f0f0f0] px-1 text-[#555]">
        <Chevron d={LEFT} />
        <div className="ml-[3px] mr-auto h-4 w-[54%] bg-[#cdcdcd]" />
        <Chevron d={RIGHT} />
      </div>
    </div>
  );
}

function TitleBar() {
  return (
    <header className="flex h-6 items-center bg-white pl-0.5 text-[#8f8f8f]">
      <Icon>{icons.logo}</Icon>
      <h1 className="ml-[5px] flex-1 whitespace-nowrap font-[Inter,Noto_Sans_CJK_SC,sans-serif]">
        广联达BIM钢筋算量软件 GGJ2013 - [C:\Users\Administrator.PC-20141127NRHM\Desktop\白龙村-2016-08-25-13-27-07(2166版).GGJ12]
      </h1>
      <div className="mr-5 flex gap-9">
        {['M0 5h10', 'M.5 2.500h7v7h-7zM2.500 2.500v-2h7v7h-2', 'M0 0l10 10M10 0L0 10'].map((d, i) => (
          <button key={d} type="button" aria-label={['最小化', '还原', '关闭'][i]}>
            <svg viewBox="0 0 10 10" className="h-2.5 w-2.5" fill="none" stroke="#888" aria-hidden="true">
              <path d={d} />
            </svg>
          </button>
        ))}
      </div>
    </header>
  );
}

function MenuRow() {
  return (
    <div className="flex h-7 items-center">
      <nav className="flex gap-[11px] pl-[7px]">
        {menus.map((m) => (
          <button key={m} type="button" className="whitespace-nowrap">
            {m}
          </button>
        ))}
      </nav>
      <div className="ml-2 flex">
        <Tool icon="newChange" label="新建变更" arrow />
        <Tool icon="robot" label="广小二" />
      </div>
      <Bar className="ml-1 w-[187px] justify-center">
        <a href="#" className="text-[#2f6b00]">如何在软件中定义四级..</a>
      </Bar>
      <Bar className="ml-0.5 flex-1">
        <Tool icon="user" label="13907298339" arrow />
        <span className="ml-1.5 whitespace-nowrap">造价豆:0</span>
        <button type="button" aria-label="消息" className="ml-2">
          <Icon>{icons.bell}</Icon>
        </button>
        <More />
      </Bar>
    </div>
  );
}

function MainToolbar() {
  return (
    <div className="flex h-[31px] items-center gap-[3px]">
      <Bar className="w-[149px]">
        <Tool icon="file" title="新建" />
        <Tool icon="open" title="打开" arrow />
        <Tool icon="save" title="保存" />
        <Sep />
        <Tool icon="undo" title="撤销" arrow />
        <More />
      </Bar>
      <Bar className="w-[550px] pl-px">
        <Tool icon="define" label="定义" />
        <Tool icon="sigma" label="汇总计算" />
        <Tool icon="cloud" label="云检查" />
        <Tool icon="align" label="平齐板顶" disabled />
        <Tool icon="find" label="查找图元" />
        <Tool icon="glasses" label="查看钢筋量" />
        <Tool icon="batch" label="批量选择" disabled />
        <More />
      </Bar>
      <Bar className="flex-1">
        <Tool icon="cube" label="三维" arrow />
        <Tool icon="cubeTop" label="俯视" arrow />
        <Tool icon="orbit" label="动态观察" active />
        <Tool icon="part3d" label="局部三维" disabled />
        <Sep />
        <Tool icon="fullscreen" label="全屏" />
        <Tool icon="zoom" label="缩放" arrow />
        <Tool icon="pan" label="平移" arrow />
        <Tool icon="screenRotate" label="屏幕旋转" arrow tight />
        <Sep />
        <Tool icon="floors" label="选择楼层" />
        <More />
      </Bar>
    </div>
  );
}

function EditToolbar() {
  return (
    <div className="flex h-7 items-center">
      <Bar className="pr-1">
        <Grip />
        <Tool icon="erase" label="删除" />
        <Sep />
        <Tool icon="copy" label="复制" />
        <Tool icon="mirror" label="镜像" />
        <Sep />
        <Tool icon="move" label="移动" />
        <Tool icon="rotate" label="旋转" />
        <Sep />
        <Tool icon="extend" label="延伸" disabled />
        <Tool icon="trim" label="修剪" disabled />
        <Sep />
        <Tool icon="breakIcon" label="打断" disabled />
        <Tool icon="merge" label="合并" />
        <Tool icon="split" label="分割" />
        <Sep />
        <Tool icon="alignSide" label="对齐" arrow tight disabled />
        <Tool icon="offset" label="偏移" />
        <Tool icon="stretch" label="拉伸" />
        <Sep />
        <Tool icon="grip" label="设置夹点" />
      </Bar>
    </div>
  );
}

function ComponentToolbar() {
  return (
    <div className="flex h-7 items-center">
      <Bar className="pr-[3px]">
        <Grip />
        <div className="mx-0.5 flex gap-[3px]">
          <Combo label="楼层" value="基础层" className="w-[57px]" />
          <Combo label="构件大类" value="基础" className="w-[69px]" />
          <Combo label="构件类型" value="筏板基础" className="w-[69px]" />
          <Combo label="构件" value="FB-2" className="w-[69px]" />
        </div>
        <Sep />
        <Tool icon="props" label="属性" />
        <Tool icon="editBar" label="编辑钢筋" active />
        <Tool icon="list" label="构件列表" />
        <Tool icon="pick" label="拾取构件" />
      </Bar>
      <Bar className="pr-1">
        <Grip />
        <Tool icon="axis2" label="两点" />
        <Tool icon="axisPar" label="平行" />
        <Tool icon="axisAngle" label="点角" arrow />
        <Tool icon="axisArc" label="三点辅轴" arrow />
        <Tool icon="erase" label="删除辅轴" />
        <Tool icon="dim" label="尺寸标注" arrow />
      </Bar>
    </div>
  );
}

function DrawToolbar() {
  return (
    <div className="flex h-[29px] items-center">
      <Bar className="flex-1">
        <Grip />
        <Tool icon="cursor" label="选择" arrow />
        <Sep />
        <Tool icon="point" label="点" />
        <Sep />
        <Tool icon="line" label="直线" />
        <Tool icon="arc" label="三点画弧" arrow />
        <Combo label="画弧方式" value="" className="w-[58px]" />
        <Tool icon="rect" label="矩形" />
        <Sep />
        <Tool icon="autoSlab" label="自动生成板" />
        <Tool icon="beamSplit" label="按梁分割" />
        <Tool icon="raftEdit" label="设置筏板变截面" />
        <Tool icon="viewBars" label="查看板内钢筋" />
        <Tool icon="slope" label="设置所有边坡" arrow />
        <Tool icon="slopeOff" label="取消多边边坡" arrow />
        <Tool icon="slant" label="三点定义斜筏板" arrow />
        <More />
      </Bar>
      <Bar className="ml-0.5 w-[33px]">
        <Grip />
      </Bar>
    </div>
  );
}

function SnapToolbar() {
  return (
    <div className="flex h-[30px] items-center">
      <Bar className="pr-[3px]">
        <Grip />
        <Tool icon="ortho" label="正交" />
        <Tool icon="snap" label="对象捕捉" active />
        <Tool icon="dynInput" label="动态输入" />
      </Bar>
      <Bar className="ml-0.5 pr-0.5">
        <Grip />
        <Tool icon="cross" label="交点" />
        <Tool icon="perp" label="垂点" active />
        <Tool icon="mid" label="中点" active />
        <Tool icon="vertex" label="顶点" />
        <Tool icon="coord" label="坐标" />
      </Bar>
      <Bar className="ml-0.5 pr-1">
        <Grip />
        <Combo label="偏移方式" value="不偏移" className="w-[58px]" />
        <Sep />
        <div className="flex items-center gap-[3px] text-[#7a7a7a]">
          <label htmlFor="offset-x">X=</label>
          <Spinner id="offset-x" value="0" className="w-[59px]" />
          <span>mm</span>
          <label htmlFor="offset-y">Y=</label>
          <Spinner id="offset-y" value="0" className="w-[59px]" />
          <span>mm</span>
        </div>
        <Sep />
        <input id="rotate-on" type="checkbox" className="h-[11px] w-[11px] appearance-none border border-[#888] bg-[#f4f4f4]" />
        <label htmlFor="rotate-on" className="ml-2 mr-1">旋转</label>
        <Spinner id="rotate-angle" value="0.000" className="w-[69px]" />
        <label htmlFor="rotate-angle" className="ml-[3px] text-[#555]">°</label>
      </Bar>
    </div>
  );
}

function RebarPanel() {
  return (
    <section className="mt-[3px] flex flex-1 pb-px">
      <div className="flex w-[13px] shrink-0 flex-col items-center pt-px">
        <button type="button" aria-label="关闭面板" className="border border-[#555] bg-[#f3d6d6]">
          <svg viewBox="0 0 10 10" className="h-2 w-2" stroke="#222" strokeWidth="1.500" aria-hidden="true">
            <path d="M1 1l8 8M9 1l-8 8" />
          </svg>
        </button>
        <div className="mt-1 w-1.5 flex-1 border-x-2 border-dotted border-[#c0c0c0]" />
      </div>
      <div className="flex min-w-0 flex-1 flex-col">
        <Bar>
          {['first', 'prev', 'next', 'last'].map((n, i) => (
            <Tool key={n} icon={n} title={['首行', '上一行', '下一行', '末行'][i]} />
          ))}
          <Sep />
          <Tool icon="up" title="上移" />
          <Tool icon="down" title="下移" />
          <Sep />
          <Tool icon="insertRow" label="插入" disabled />
          <Tool icon="removeRow" label="删除" disabled />
          <Tool icon="scaleBar" label="缩尺配筋" disabled />
          <Tool icon="barInfo" label="钢筋信息" disabled />
          <Tool icon="barLib" label="钢筋图库" disabled />
          <Tool icon="others" label="其他" arrow tight />
          <button type="button" className="mx-1 whitespace-nowrap">关闭</button>
          <Sep />
          <span className="ml-1 whitespace-nowrap">单构件钢筋总重(kg)：0</span>
        </Bar>
        <RebarTable />
      </div>
    </section>
  );
}

function StatusBar() {
  const cell = 'flex h-[19px] items-center whitespace-nowrap border border-[#d0d0d0] bg-linear-to-b from-[#fdfdfd] to-[#f1f1f1] pl-px';
  return (
    <footer className="flex h-[22px] items-center gap-0.5 font-[Liberation_Serif,Noto_Sans_CJK_SC,serif]">
      <span className={clsx(cell, 'w-[148px]')}>X=416578 Y=26385</span>
      <span className={clsx(cell, 'w-[78px]')}>层高:2.15m</span>
      <span className={clsx(cell, 'w-[98px]')}>底标高:-2.2m</span>
      <span className={clsx(cell, 'w-12')}>0</span>
      <span className={clsx(cell, 'flex-1')} />
      <span className={clsx(cell, 'w-[70px]')}>305.6 FPS</span>
    </footer>
  );
}

function TrayIcon({ label, children, className = 'w-6' }: { label: string; children: React.ReactNode; className?: string }) {
  return (
    <button type="button" aria-label={label} className={clsx('flex shrink-0 justify-center', className)}>
      <svg viewBox="0 0 16 16" className="h-4 w-4" fill="none" stroke="#fff" strokeWidth="1.200" aria-hidden="true">
        {children}
      </svg>
    </button>
  );
}

function TaskIcon({ label, running, children }: { label: string; running?: boolean; children: React.ReactNode }) {
  return (
    <button type="button" aria-label={label} className="flex h-10 w-[49px] shrink-0 flex-col items-center">
      <svg viewBox="0 0 26 26" className="my-auto h-[26px] w-[26px]" aria-hidden="true">
        {children}
      </svg>
      {running && <span className="h-[3px] w-10 bg-[#76b9ed]" />}
    </button>
  );
}

function Taskbar() {
  return (
    <footer className="flex h-10 items-center bg-[#04151a] text-white">
      <button type="button" aria-label="开始" className="flex h-10 w-12 shrink-0 items-center justify-center">
        <Icon>
          <path d="M0 2.300L6.800 1.300v6.200H0zM7.600 1.200L16 0v7.500H7.600zM0 8.300h6.800v6.200L0 13.600zM7.600 8.300H16V16l-8.400-1.200z" fill="#fff" />
        </Icon>
      </button>
      <div className="flex h-10 w-[344px] shrink-0 items-center bg-[#f1f1f1] px-2">
        <svg viewBox="0 0 24 24" className="h-6 w-6" aria-hidden="true">
          <circle cx="12" cy="12" r="9" fill="none" stroke="#111" strokeWidth="3" />
        </svg>
        <input aria-label="搜索" placeholder="在这里输入你要搜索的内容" className="ml-2 min-w-0 flex-1 bg-transparent text-[14px] text-[#444] outline-none placeholder:text-[#444]" />
        <svg viewBox="0 0 16 20" className="mr-1 h-5 w-4" fill="none" stroke="#333" strokeWidth="1.200" aria-hidden="true">
          <rect x="5" y="2" width="6" height="11" rx="2" />
          <path d="M3 10v3c0 3 10 3 10 0v-3M8 15v3M5.500 18h5" />
        </svg>
      </div>
      <TaskIcon label="任务视图">
        <path d="M5 5v3h11V5M5 21v-3h11v3M5 9.500h11v7H5zM20 5v3M20 16v5M20 10v3.500" fill="none" stroke="#fff" strokeWidth="1.400" />
      </TaskIcon>
      <TaskIcon label="应用中心">
        <g fill="#f2f2f2">
          <path id="petal" d="M12.500 12.500C13 8 12 3 8 2.500S1.500 5 2.500 8s6 4 10 4.500z" />
          <path d="M13.500 12.500C18 13 23 12 23.500 8S21 1.500 18 2.500s-4 6-4.500 10z" />
          <path d="M13.500 13.500C13 18 14 23 18 23.500s6.500-2.500 5.500-5.500-6-4-10-4.500z" />
          <path d="M12.500 13.500C8 13 3 14 2.500 18S5 24.500 8 23.500s4-6 4.500-10z" />
        </g>
      </TaskIcon>
      <TaskIcon label="浏览器">
        <path d="M22 18c-4 7-16 5-16-4C6 6 13 4 17 6c4 1.500 6 5 6 9H10c0 5 6 6 12 3zM10 12h8.500c0-5-8-5-8.500 0z" fill="#fff" fillRule="evenodd" />
        <path d="M20 5c2-5-7-3-12 4S1 23 5 24c2 0 3-.5 5-2" fill="none" stroke="#fff" strokeWidth="1.500" />
      </TaskIcon>
      <TaskIcon label="消息中心">
        <path d="M11 13c2-2 5 0 4 3-2 4-8 3-9-1-1-6 5-9 10-6 5 4 3 11-2 14-6 2-12-2-12-8 0-6 4-10 9-10M13 13c0 3-3 2-3 1" fill="none" stroke="#ddd" strokeWidth="1.500" />
        <path d="M20 0c-4 0-4 4-4 7l-2 3h12l-2-3c0-3 0-7-4-7zM18 11h4l-2 2z" fill="#f0a30a" />
      </TaskIcon>
      <span className="mx-1.5 h-4 w-1 border-x border-[#45555a]" />
      <div className="flex flex-1 pl-3">
        <TaskIcon label="广联达" running>
          <path d="M21 1c-9-2-19 3-19 12 0 8 7 12 13 12 4 0 7-2 7-2l-1-2c4-2 3-8 2-10H12v4h5c0 4-8 5-9-2-1-6 6-11 13-12z" fill="#2196f3" />
        </TaskIcon>
        <TaskIcon label="钢筋算量" running>
          <rect x="1" y="1" width="24" height="24" rx="4" fill="#108ee9" />
          <path d="M13 6v14M5 13h16M5 13c0 4 3 7 8 7M10.500 7c2-3 9-2 9.500 4" fill="none" stroke="#fff" strokeWidth="2" />
        </TaskIcon>
        <TaskIcon label="记事" running>
          <rect x="1" y="1" width="24" height="24" rx="2" fill="#f5a623" />
          <path d="M4 7l14-3 3 16-14 3z" fill="#fff" />
          <path d="M7 10l7-1M7 13l5-1M9 17l10-11 2 2-10 11-3 1z" fill="none" stroke="#8a5a1a" strokeWidth="1.500" />
        </TaskIcon>
      </div>
      <div className="flex h-10 w-4 shrink-0 flex-col items-center justify-between bg-[#f0f0f0] py-1 text-[#555]">
        <Chevron d={UP} />
        <Chevron d={DOWN} />
      </div>
      <span className="ml-3 mr-2.5 h-4 w-1 border-x border-[#45555a]" />
      <span className="whitespace-nowrap">链接</span>
      <div className="ml-5 w-[50px] shrink-0 whitespace-nowrap text-center leading-[17px]">
        32%
        <br />
        CPU使用
      </div>
      <TrayIcon label="人脉" className="ml-7 mr-3 w-6">
        <circle cx="5.500" cy="7" r="2.500" />
        <circle cx="11.500" cy="3.500" r="2.500" />
        <path d="M1.500 15c0-7 8-7 8 0M8.500 8c3-3 7-1 7 3.500" />
      </TrayIcon>
      <TrayIcon label="显示隐藏的图标">
        <path d="M3 10.500l5-5 5 5" strokeWidth="1.500" />
      </TrayIcon>
      <TrayIcon label="通知">
        <path d="M8 1c-3.500 0-4 3-4 5 0 3-.5 4-2 5.500h12C12.500 10 12 9 12 6c0-2-.5-5-4-5zM6 13h4l-2 2z" fill="#fff" stroke="none" />
      </TrayIcon>
      <TrayIcon label="电源">
        <path d="M5.500 5.500h9v7h-7M15.500 8v2M1 3.500h5v3c0 2-5 2-5 0zM2.500 1v2M4.500 1v2M3.500 8v4.500h3" />
      </TrayIcon>
      <TrayIcon label="网络">
        <path d="M2 12C3 6 8 3 14 3M5 13c1-4 4-7 9-7M8 14c1-3 3-4 6-5" />
        <path d="M11 14c0-2 1-2 3-2v2z" fill="#fff" />
      </TrayIcon>
      <TrayIcon label="音量">
        <path d="M1 6h3l3-3v10L4 10H1zM9 6c1 1 1 3 0 4M11 4c2 2 2 6 0 8M13 2.500c3 3 3 8 0 11" />
      </TrayIcon>
      <button type="button" aria-label="触摸键盘" className="mx-0.5 shrink-0">
        <svg viewBox="0 0 24 14" className="h-3.5 w-6" fill="none" stroke="#fff" aria-hidden="true">
          <path d="M.5.5h23v13H.500z" />
          <path d="M3 4.500h18M3 7.500h18" strokeDasharray="2 1" />
          <path d="M3 10.500h2M7 10.500h10M19 10.500h2" />
        </svg>
      </button>
      <span className="ml-[7px] w-4 shrink-0 text-center">中</span>
      <TrayIcon label="输入法" className="mx-2 w-6">
        <rect width="16" height="16" rx="3" fill="#f04e23" stroke="none" />
        <path d="M12 4.500C9 3 4.500 3.500 5 6s6.500 1.500 6.500 4-4.500 3-7.500 1" strokeWidth="2" />
      </TrayIcon>
      <div className="w-[70px] shrink-0 whitespace-nowrap text-center leading-[19px]">
        17:33
        <br />
        2018/9/17
      </div>
      <button type="button" aria-label="操作中心" className="mx-3 shrink-0">
        <svg viewBox="0 0 26 26" className="h-[26px] w-[26px]" aria-hidden="true">
          <path d="M2 3h16v12H9l-3 4v-4H2z" fill="#fff" />
          <path d="M4.500 6.500h11M4.500 9.500h11M4.500 12.500h7" stroke="#04151a" />
          <circle cx="17.500" cy="17.500" r="7.500" fill="#2b3438" stroke="#8a9296" />
          <text x="17.500" y="22" fontSize="12" textAnchor="middle" fill="#fff">1</text>
        </svg>
      </button>
      <span className="h-10 w-1 shrink-0 border-l border-[#45555a]" />
    </footer>
  );
}

export default function App() {
  return (
    <div className="relative flex min-h-screen flex-col overflow-hidden bg-[#f0f0f0] font-[Noto_Sans,Noto_Sans_CJK_SC,sans-serif] text-xs leading-4 text-black">
      <TitleBar />
      <MenuRow />
      <MainToolbar />
      <main className="flex flex-1">
        <Sidebar />
        <div className="flex min-w-0 flex-1 flex-col pl-[3px] pr-px">
          <EditToolbar />
          <ComponentToolbar />
          <DrawToolbar />
          <Viewport />
          <SnapToolbar />
          <RebarPanel />
        </div>
      </main>
      <StatusBar />
      <Taskbar />
      {/* 悬浮加速球 */}
      <div className="absolute -top-7 left-[461px] flex h-12 w-12 items-end justify-center rounded-full border-2 border-[#d5ead8] bg-[#3fc45c] pb-0.5 font-bold text-white shadow-md">
        70
      </div>
    </div>
  );
}
